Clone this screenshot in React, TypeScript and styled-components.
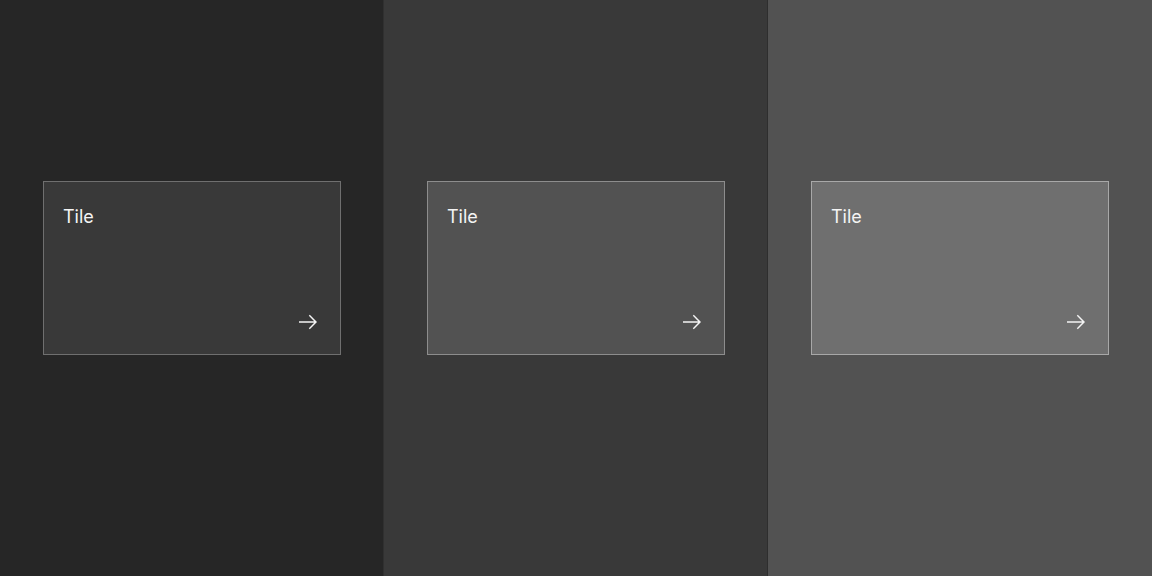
import styled, {createGlobalStyle} from 'styled-components'

const GlobalStyle = createGlobalStyle`
  html, body {
    margin: 0;
    padding: 0;
    background: #262626;
  }
  body {
    font-family: Inter, "Noto Sans", sans-serif;
  }
`

const themes = [
  {bg: '#262626', tile: '#393939', border: '#6f6f6f', divider: '#303030'},
  {bg: '#393939', tile: '#525252', border: '#8d8d8d', divider: '#2e2e2e'},
  {bg: '#525252', tile: '#6f6f6f', border: '#a8a8a8', divider: 'transparent'},
]

const Page = styled.div`
  display: grid;
  grid-template-columns: repeat(3, 384px);
  height: 576px;
  width: 1152px;
`

const Column = styled.div<{$bg: string; $divider: string}>`
  background: ${({$bg}) => $bg};
  box-shadow: inset -1px 0 0 ${({$divider}) => $divider};
  padding: 181px 0 0 43px;
  box-sizing: border-box;
`

const Tile = styled.a<{$bg: string; $border: string}>`
  display: flex;
  flex-direction: column;
  justify-content: space-between;
  box-sizing: border-box;
  width: 298px;
  height: 174px;
  padding: 23px 22px 22px 19px;
  background: ${({$bg}) => $bg};
  border: 1px solid ${({$border}) => $border};
  color: #f4f4f4;
  text-decoration: none;
  cursor: pointer;
`

const TileTitle = styled.span`
  font-size: 18px;
  line-height: 24px;
  font-weight: 400;
  letter-spacing: 0;
`

const IconWrap = styled.span`
  align-self: flex-end;
  display: flex;
  width: 20px;
  height: 20px;
  color: #f4f4f4;
`

const ArrowRight = () => (
  <svg width="20" height="20" viewBox="0 0 20 20" fill="currentColor" aria-hidden="true">
    <path d="M11.8 2.8L10.8 3.8 16.2 9.3 1 9.3 1 10.7 16.2 10.7 10.8 16.2 11.8 17.2 19 10z" />
  </svg>
)

export default function App() {
  return (
    <>
      <GlobalStyle />
      <Page>
        {themes.map((t, i) => (
          <Column key={i} $bg={t.bg} $divider={t.divider}>
            <Tile href="#" $bg={t.tile} $border={t.border}>
              <TileTitle>Tile</TileTitle>
              <IconWrap>
                <ArrowRight />
              </IconWrap>
            </Tile>
          </Column>
        ))}
      </Page>
    </>
  )
}
